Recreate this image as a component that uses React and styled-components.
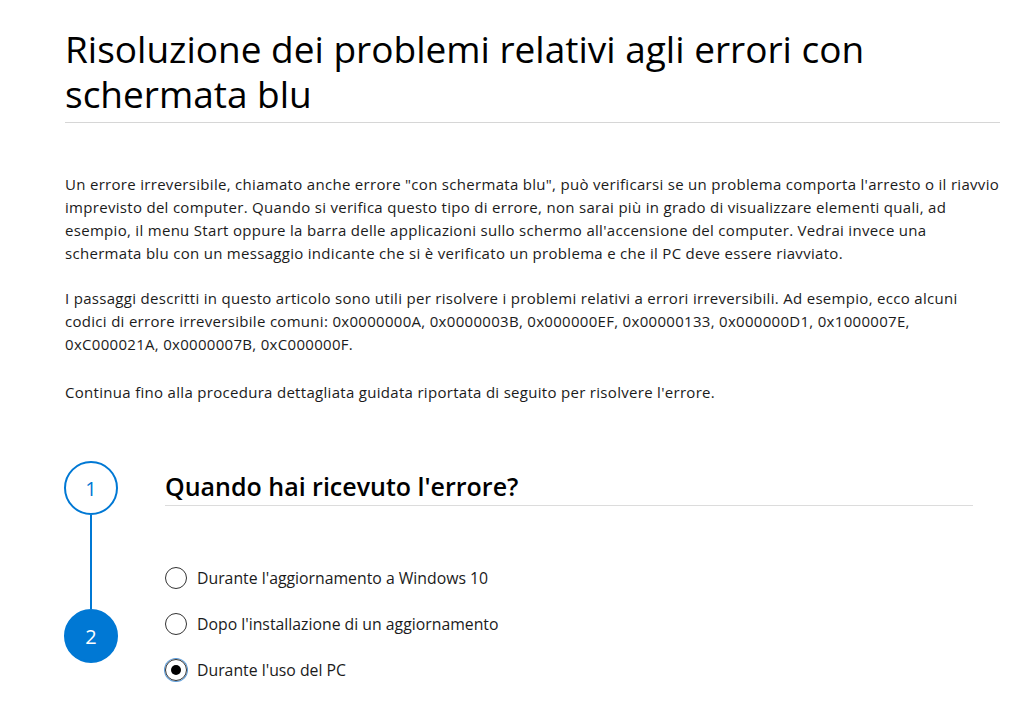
import React, { useState } from "react";
import styled, { createGlobalStyle } from "styled-components";

const Global = createGlobalStyle`
  html, body { margin: 0; padding: 0; background: #fff; }
  body { font-family: "Open Sans", "Noto Sans", sans-serif; color: #171717; }
`;

const Page = styled.main`
  padding: 26px 24px 0 65px;
  width: 935px;
`;

const Title = styled.h1`
  margin: 0;
  font-size: 37px;
  line-height: 45px;
  font-weight: 400;
  color: #000;
  padding-bottom: 6px;
  border-bottom: 1px solid #d6d6d6;
`;

const TitleLine = styled.span`
  display: block;
`;

const Body = styled.div`
  margin-top: 50px;
`;

const Para = styled.p`
  margin: 0 0 ${(p) => p.$gap ?? 22}px;
  font-size: 15px;
  letter-spacing: 0.3px;
  line-height: 23px;
  color: #1b1b1b;
  white-space: nowrap;
`;

const Step = styled.section`
  display: grid;
  grid-template-columns: 100px 808px;
  margin-top: 57px;
`;

const Track = styled.div`
  display: flex;
  flex-direction: column;
  align-items: flex-start;
`;

const Circle = styled.div`
  width: 54px;
  height: 54px;
  box-sizing: border-box;
  border-radius: 50%;
  border: 2px solid #0078d4;
  background: ${(p) => (p.$filled ? "#0078d4" : "#fff")};
  color: ${(p) => (p.$filled ? "#fff" : "#0078d4")};
  display: flex;
  align-items: center;
  justify-content: center;
  font-size: 20px;
  font-weight: 400;
  margin-left: -1px;
`;

const Line = styled.div`
  width: 2px;
  height: 94px;
  background: #0078d4;
  margin-left: 25px;
`;

const Content = styled.div`
  display: flex;
  flex-direction: column;
`;

const Heading = styled.h2`
  margin: 9px 0 0;
  font-size: 25px;
  line-height: 32px;
  font-weight: 600;
  color: #000;
  padding-bottom: 3px;
  border-bottom: 1px solid #dcdcdc;
`;

const Options = styled.div`
  display: flex;
  flex-direction: column;
  margin-top: 49px;
`;

const Option = styled.label`
  display: flex;
  align-items: center;
  height: 46px;
  gap: 10px;
  font-size: 15.8px;
  color: #1b1b1b;
  cursor: pointer;
`;

const Radio = styled.span`
  width: 22px;
  height: 22px;
  box-sizing: border-box;
  border-radius: 50%;
  border: 1.5px solid #333;
  box-shadow: ${(p) => (p.$checked ? "0 0 0 1px #5b9bd8" : "none")};
  display: flex;
  align-items: center;
  justify-content: center;
  flex-shrink: 0;
  &::after {
    content: "";
    width: 10px;
    height: 10px;
    border-radius: 50%;
    background: #000;
    display: ${(p) => (p.$checked ? "block" : "none")};
  }
`;

const HiddenInput = styled.input`
  position: absolute;
  opacity: 0;
  width: 0;
  height: 0;
`;

const options = [
  "Durante l'aggiornamento a Windows 10",
  "Dopo l'installazione di un aggiornamento",
  "Durante l'uso del PC",
];

export default function App() {
  const [sel, setSel] = useState(2);
  return (
    <>
      <Global />
      <Page>
        <Title>
          <TitleLine>Risoluzione dei problemi relativi agli errori con</TitleLine>
          <TitleLine>schermata blu</TitleLine>
        </Title>
        <Body>
          <Para>
            Un errore irreversibile, chiamato anche errore "con schermata blu", può verificarsi se un problema comporta l'arresto o il riavvio
            <br />
            imprevisto del computer. Quando si verifica questo tipo di errore, non sarai più in grado di visualizzare elementi quali, ad
            <br />
            esempio, il menu Start oppure la barra delle applicazioni sullo schermo all'accensione del computer. Vedrai invece una
            <br />
            schermata blu con un messaggio indicante che si è verificato un problema e che il PC deve essere riavviato.
          </Para>
          <Para $gap={25}>
            I passaggi descritti in questo articolo sono utili per risolvere i problemi relativi a errori irreversibili. Ad esempio, ecco alcuni
            <br />
            codici di errore irreversibile comuni: 0x0000000A, 0x0000003B, 0x000000EF, 0x00000133, 0x000000D1, 0x1000007E,
            <br />
            0xC000021A, 0x0000007B, 0xC000000F.
          </Para>
          <Para $gap={0}>
            Continua fino alla procedura dettagliata guidata riportata di seguito per risolvere l'errore.
          </Para>
        </Body>
        <Step>
          <Track>
            <Circle>1</Circle>
            <Line />
            <Circle $filled>2</Circle>
          </Track>
          <Content>
            <Heading>Quando hai ricevuto l'errore?</Heading>
            <Options>
              {options.map((o, i) => (
                <Option key={o}>
                  <HiddenInput
                    type="radio"
                    name="when"
                    checked={sel === i}
                    onChange={() => setSel(i)}
                  />
                  <Radio $checked={sel === i} />
                  {o}
                </Option>
              ))}
            </Options>
          </Content>
        </Step>
      </Page>
    </>
  );
}
